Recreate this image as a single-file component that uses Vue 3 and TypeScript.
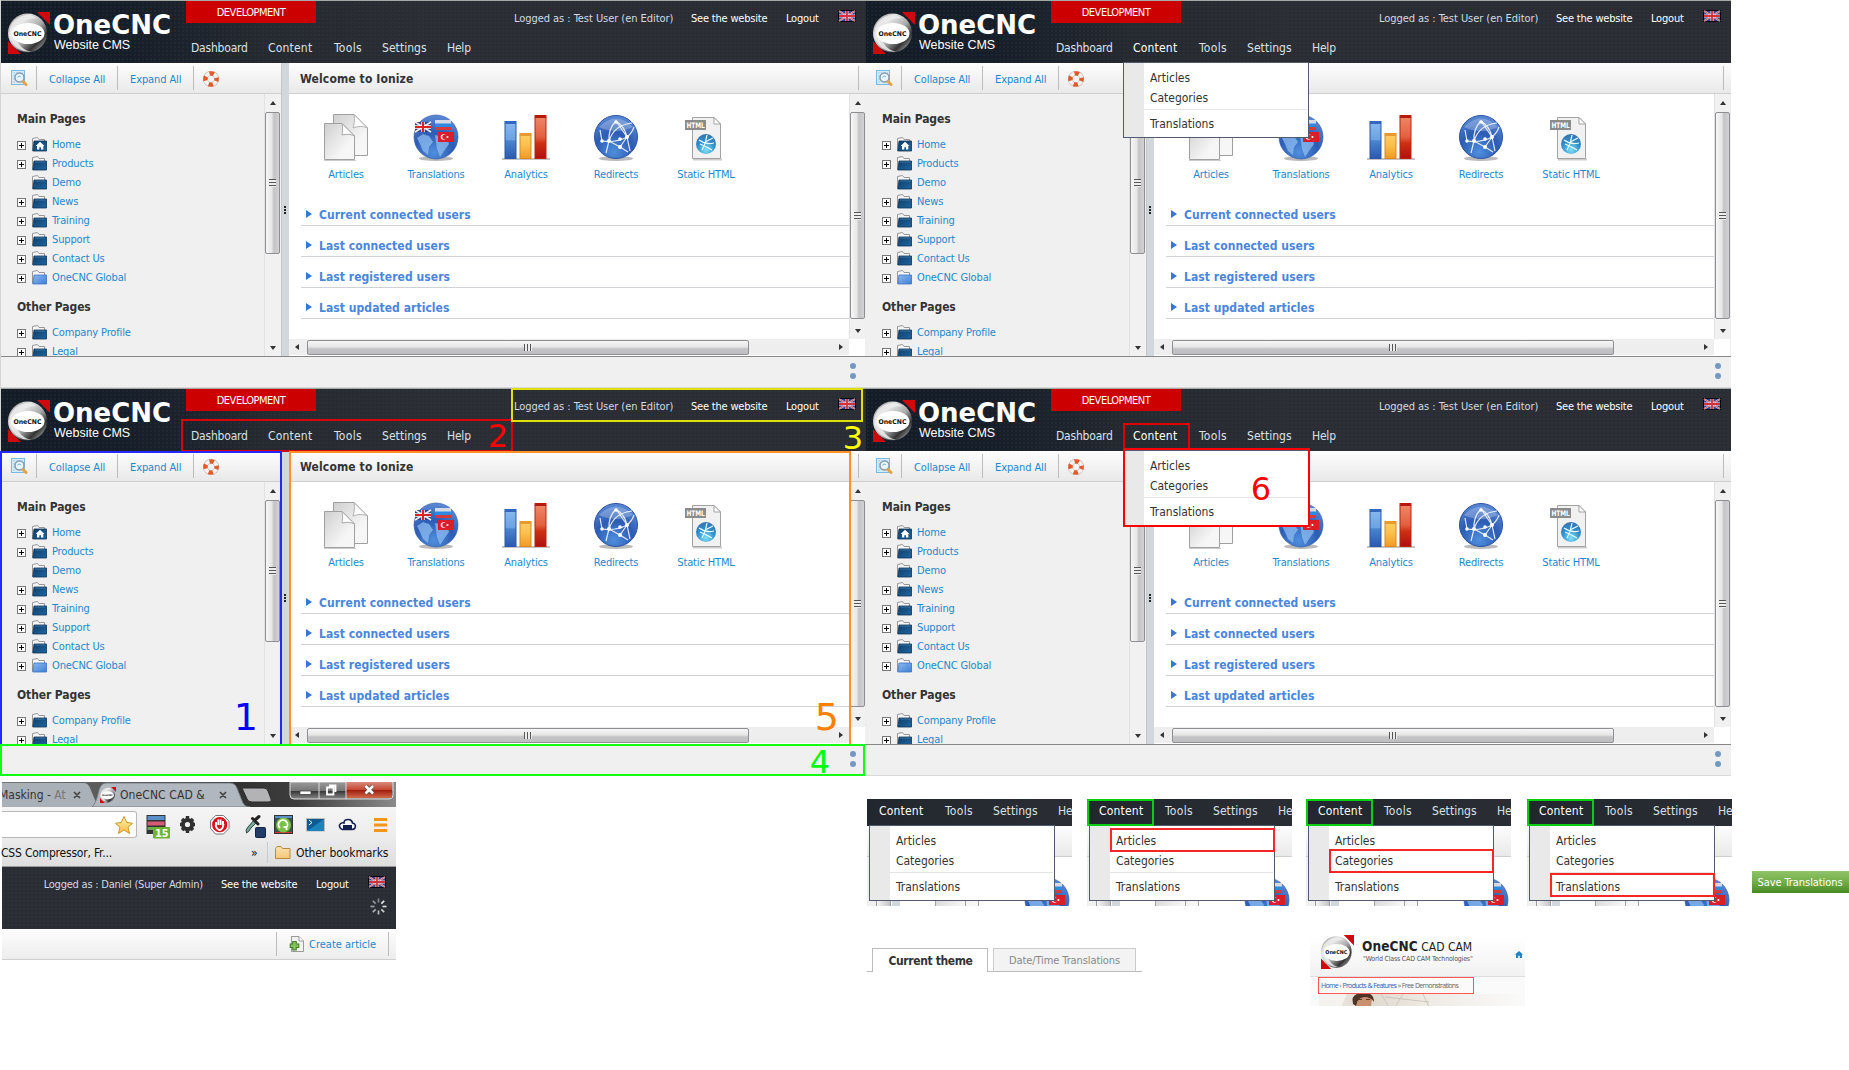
<script setup lang="ts">
interface Panel { open: boolean }
interface Mark { cls: string; label: string }

const panels: Panel[] = [{ open: false }, { open: true }, { open: false }, { open: true }]
const nav: string[] = ['Dashboard', 'Content', 'Tools', 'Settings', 'Help']
const mainPages = [
  { name: 'Home', icon: 'folder-home', plus: true },
  { name: 'Products', icon: 'folder', plus: true },
  { name: 'Demo', icon: 'folder', plus: false },
  { name: 'News', icon: 'folder', plus: true },
  { name: 'Training', icon: 'folder', plus: true },
  { name: 'Support', icon: 'folder', plus: true },
  { name: 'Contact Us', icon: 'folder', plus: true },
  { name: 'OneCNC Global', icon: 'folder-light', plus: true },
]
const otherPages = [
  { name: 'Company Profile', icon: 'folder', plus: true },
  { name: 'Legal', icon: 'folder', plus: true },
]
const groups = [
  { title: 'Main Pages', pages: mainPages },
  { title: 'Other Pages', pages: otherPages },
]
const shortcuts = [
  { name: 'Articles', icon: 'articles' },
  { name: 'Translations', icon: 'globe-flags' },
  { name: 'Analytics', icon: 'analytics' },
  { name: 'Redirects', icon: 'redirects' },
  { name: 'Static HTML', icon: 'html' },
]
const sections: string[] = ['Current connected users', 'Last connected users', 'Last registered users', 'Last updated articles']
const marks: Mark[] = [
  { cls: 'm2', label: '2' },
  { cls: 'm3', label: '3' },
  { cls: 'm1', label: '1' },
  { cls: 'm5', label: '5' },
  { cls: 'm4', label: '4' },
  { cls: 'm6a', label: '' },
  { cls: 'm6', label: '6' },
]
const menuShots: string[] = ['', 'hit-articles', 'hit-categories', 'hit-translations']
const spokes: number[] = [0, 45, 90, 135, 180, 225, 270, 315]
</script>

<template>
  <div class="page">
    <svg class="defs" width="0" height="0">
      <defs>
        <linearGradient id="gSteel" x1="0" y1="0" x2="1" y2="1">
          <stop offset="0" stop-color="#777" /><stop offset=".3" stop-color="#e4e4e4" /><stop offset=".55" stop-color="#aaa" /><stop offset=".75" stop-color="#333" /><stop offset="1" stop-color="#ddd" />
        </linearGradient>
        <linearGradient id="gFolder" x1="0" y1="0" x2="1" y2="1"><stop offset="0" stop-color="#0f3f6c" /><stop offset="1" stop-color="#1f659f" /></linearGradient>
        <linearGradient id="gFolderL" x1="0" y1="0" x2="1" y2="1"><stop offset="0" stop-color="#8db8f2" /><stop offset="1" stop-color="#3e7fd6" /></linearGradient>
        <linearGradient id="gPaper" x1="0" y1="0" x2="1" y2="1"><stop offset="0" stop-color="#cfcfcf" /><stop offset=".7" stop-color="#f6f6f6" /></linearGradient>
        <radialGradient id="gGlobe" cx=".45" cy=".85" r=".9"><stop offset="0" stop-color="#4f8fdd" /><stop offset=".5" stop-color="#2c5cb4" /><stop offset="1" stop-color="#6090da" /></radialGradient>
        <radialGradient id="gGlobe2" cx=".5" cy=".8" r=".9"><stop offset="0" stop-color="#7fe0f8" /><stop offset=".5" stop-color="#2f8fcb" /><stop offset="1" stop-color="#3a6aa8" /></radialGradient>
        <linearGradient id="gBlue" x1="0" y1="0" x2="0" y2="1"><stop offset="0" stop-color="#8ab9ee" /><stop offset=".5" stop-color="#6ba2e2" /><stop offset=".52" stop-color="#4a84cf" /><stop offset="1" stop-color="#2b59b0" /></linearGradient>
        <linearGradient id="gGold" x1="0" y1="0" x2="0" y2="1"><stop offset="0" stop-color="#fbd06a" /><stop offset=".45" stop-color="#fbc04f" /><stop offset="1" stop-color="#f09a26" /></linearGradient>
        <linearGradient id="gRed" x1="0" y1="0" x2="0" y2="1"><stop offset="0" stop-color="#f08a68" /><stop offset=".5" stop-color="#e2603f" /><stop offset=".65" stop-color="#cc3010" /><stop offset="1" stop-color="#b01010" /></linearGradient>
        <linearGradient id="gStar" x1="0" y1="0" x2="0" y2="1"><stop offset="0" stop-color="#fff3b0" /><stop offset="1" stop-color="#f7b93c" /></linearGradient>
        <linearGradient id="gYFolder" x1="0" y1="0" x2="0" y2="1"><stop offset="0" stop-color="#fbe3ac" /><stop offset="1" stop-color="#f3c777" /></linearGradient>
      </defs>

      <symbol id="emblem" viewBox="0 0 42 42">
        <path d="M29 0H42V13zM0 29V42H13z" fill="#cf0a0f" />
        <circle cx="19.500" cy="21" r="19.500" fill="url(#gSteel)" />
        <path d="M1.500 21A18 18 0 0 1 30 6.500C21 5 8 10 7.500 21C8 32 16 39 23 39.500A19 19 0 0 1 1.500 21z" fill="#ececec" opacity=".85" />
        <ellipse cx="20" cy="21.500" rx="16.500" ry="10.500" fill="#fff" />
        <text x="5.500" y="23.500" textLength="28" lengthAdjust="spacingAndGlyphs" font-size="6.500" font-weight="700" font-family="DejaVu Sans" fill="#111">OneCNC</text>
      </symbol>

      <symbol id="uk" viewBox="0 0 18 12">
        <rect width="18" height="12" fill="#05050d" />
        <rect x="1" y="1" width="16" height="10" fill="#34458a" />
        <path d="M1 1L17 11M17 1L1 11" stroke="#e6c8d0" stroke-width="1.800" />
        <path d="M1 1L17 11M17 1L1 11" stroke="#d0434e" stroke-width=".8" />
        <path d="M9 1V11M1 6H17" stroke="#f5e2e4" stroke-width="3" />
        <path d="M9 1V11M1 6H17" stroke="#d5303c" stroke-width="1.800" />
      </symbol>

      <symbol id="folder" viewBox="0 0 15 15">
        <path d="M.5 13.500V1.500L5.500 .5L7 2.500H12.500V5" fill="#f5f5f5" stroke="#969696" />
        <path d="M2 5H14.500V14H.8z" fill="url(#gFolder)" stroke="#0c3357" stroke-width=".8" />
        <path d="M2.800 6H13.500" stroke="#4a86b5" stroke-width=".7" />
      </symbol>
      <symbol id="folder-light" viewBox="0 0 15 15">
        <path d="M.5 13.500V1.500L5.500 .5L7 2.500H12.500V5" fill="#f5f5f5" stroke="#969696" />
        <path d="M2 5H14.500V14H.8z" fill="url(#gFolderL)" stroke="#3b73c4" stroke-width=".8" />
      </symbol>
      <symbol id="folder-home" viewBox="0 0 15 15">
        <path d="M.5 13.500V1.500L5.500 .5L7 2.500H12.500V5" fill="#f5f5f5" stroke="#969696" />
        <path d="M2 4H14.500V14H.8z" fill="url(#gFolder)" stroke="#0c3357" stroke-width=".8" />
        <path d="M8 4.800L12.500 9H11.300V12.500H9V10.200H7.300V12.500H5V9H3.700z" fill="#fff" />
      </symbol>

      <symbol id="search" viewBox="0 0 17 17">
        <rect x=".5" y=".5" width="13" height="14" fill="#d4ecfb" stroke="#7cb9e0" />
        <path d="M2 3H12M2 6H5M2 9H5M2 12H5" stroke="#9fcdea" stroke-dasharray="2 1" />
        <circle cx="8.500" cy="7.500" r="4.500" fill="#eaf6fe" stroke="#8b9bab" stroke-width="1.500" />
        <path d="M6.500 7.500A2 2 0 0 1 10 7" stroke="#6bb3e4" fill="none" />
        <path d="M12 11.500L15 14.500" stroke="#e0a548" stroke-width="3" stroke-linecap="round" />
      </symbol>
      <symbol id="buoy" viewBox="0 0 16 16">
        <circle cx="8" cy="8" r="5.600" fill="none" stroke="#b9b0ab" stroke-width="4.800" />
        <circle cx="8" cy="8" r="5.600" fill="none" stroke="#f7f3f0" stroke-width="3.800" />
        <circle cx="8" cy="8" r="5.600" fill="none" stroke="#e4592a" stroke-width="4.400" stroke-dasharray="4.400 4.400" stroke-dashoffset="2.200" />
      </symbol>

      <symbol id="articles" viewBox="0 0 48 48">
        <path d="M11.500 1.500H32L45.500 15V42.500H11.500z" fill="url(#gPaper)" stroke="#a0a0a0" />
        <path d="M32 1.500C33 7 32 12 31 15C36 13 41 13 45.500 15z" fill="#fcfcfc" stroke="#b0b0b0" />
        <path d="M2.500 10.500H20L32.500 23V46.500H2.500z" fill="url(#gPaper)" stroke="#a0a0a0" />
        <path d="M20 10.500C21 15 20.500 19 20 22C24 21 29 21 32.500 23z" fill="#fcfcfc" stroke="#aaa" />
        <path d="M2 47.500H34" stroke="#ccc" />
      </symbol>
      <symbol id="globe-flags" viewBox="0 0 48 48">
        <ellipse cx="24" cy="45.500" rx="17" ry="2.500" fill="#bbb" />
        <circle cx="24" cy="24" r="22" fill="url(#gGlobe)" stroke="#2a51a0" stroke-width=".6" />
        <path d="M5 25L11 21L17 23L21 29L17 34L16 42L11 38L8 31zM23 22L35 25L37 31L32 38L28 44L25 36z" fill="#8dbcf0" opacity=".75" />
        <g transform="translate(3 9)"><rect width="16" height="10" fill="#304489" /><path d="M0 0L16 10M16 0L0 10" stroke="#eee" stroke-width="1.600" /><path d="M8 0V10M0 5H16" stroke="#fff" stroke-width="3.400" /><path d="M8 0V10M0 5H16" stroke="#d22" stroke-width="2" /></g>
        <g transform="translate(23 7)"><rect width="16" height="4" fill="#d5dae2" /><rect y="3.500" width="16" height="4" fill="#2a8be0" /><rect y="7" width="16" height="3" fill="#d63a3a" /></g>
        <g transform="translate(26 19)"><rect width="16" height="10" fill="#dc1d2a" /><circle cx="5.500" cy="5" r="2.800" fill="#fff" /><circle cx="6.400" cy="5" r="2.200" fill="#dc1d2a" /><circle cx="9.500" cy="5" r="1" fill="#fff" /></g>
      </symbol>
      <symbol id="analytics" viewBox="0 0 48 48">
        <path d="M0 46H48" stroke="#c5c5c5" stroke-width="2" />
        <rect x="3" y="8.500" width="11" height="37" fill="url(#gBlue)" stroke="#2b58ac" /><path d="M2.500 11L4 8H13L14.500 11" fill="#3067c0" />
        <rect x="18" y="20.500" width="11" height="25" fill="url(#gGold)" stroke="#dc871e" /><path d="M17.500 23L19 20H28L29.500 23" fill="#e79a2d" />
        <rect x="33" y="2.500" width="11" height="43" fill="url(#gRed)" stroke="#b7260d" /><path d="M32.500 5L34 2H43L44.500 5" fill="#b5180c" />
      </symbol>
      <symbol id="redirects" viewBox="0 0 48 48">
        <ellipse cx="24" cy="45.500" rx="17" ry="2.500" fill="#bbb" />
        <circle cx="24" cy="24" r="21.500" fill="url(#gGlobe)" stroke="#2a51a0" />
        <path d="M7 14Q24 -3 41 14Q24 22 7 14z" fill="#fff" opacity=".25" />
        <path d="M24 8Q16 16 17 28L14 40M24 8Q33 14 35 24L38 38M10 28Q24 30 35 24Q40 20 42 14M17 28Q22 12 40 10M17 28L28 34L35 24M28 34L36 39M10 28L8 17M24 8L35 24" stroke="#fff" stroke-width="1.200" fill="none" opacity=".85" />
        <g fill="#fff"><circle cx="24" cy="9" r="1.800" /><circle cx="10" cy="28" r="1.800" /><circle cx="17" cy="28" r="2" /><circle cx="28" cy="34" r="2" /><circle cx="35" cy="24" r="2" /><circle cx="28" cy="26" r="1.800" /></g>
      </symbol>
      <symbol id="html" viewBox="0 0 48 48">
        <path d="M11 46.500H40" stroke="#ccc" stroke-width="2" />
        <path d="M10.500 4.500H32L38.500 11V45.500H10.500z" fill="#f1f1f1" stroke="#a2a2a2" />
        <path d="M32 4.500V11H38.500z" fill="#fff" stroke="#a2a2a2" />
        <rect x="3" y="7" width="21" height="10" fill="#8b8b8b" />
        <text x="4.500" y="15" textLength="18" lengthAdjust="spacingAndGlyphs" font-size="7.500" font-weight="700" font-family="DejaVu Sans" fill="#fff">HTML</text>
        <circle cx="24" cy="31" r="10" fill="url(#gGlobe2)" />
        <path d="M17 27Q24 32 32 30M20 37Q24 30 25 22M18 31Q25 34 30 37M23 29L31 25" stroke="#e8fbff" stroke-width="1.200" fill="none" />
      </symbol>
    </svg>

    <div class="panels">
      <section v-for="(p, i) in panels" :key="i" class="panel">
        <header class="head">
          <svg class="emblem" width="42" height="42"><use href="#emblem" /></svg>
          <div class="brand"><b>OneCNC</b><span>Website CMS</span></div>
          <div class="head-mid">
            <div class="env">DEVELOPMENT</div>
            <nav class="nav">
              <span v-for="n in nav" :key="n" :class="[n.toLowerCase(), { on: p.open && n === 'Content' }]">{{ n }}</span>
            </nav>
          </div>
          <div class="user">
            <span class="who">Logged as : Test User (en Editor)</span><span class="see">See the website</span><span class="out">Logout</span>
            <svg width="18" height="12"><use href="#uk" /></svg>
          </div>
        </header>
        <div class="body">
          <aside class="side">
            <div class="bar">
              <svg class="i-search" width="17" height="17"><use href="#search" /></svg>
              <i class="sep"></i><a class="b1">Collapse All</a><i class="sep"></i><a class="b2">Expand All</a><i class="sep"></i>
              <svg class="i-buoy" width="16" height="16"><use href="#buoy" /></svg>
            </div>
            <div class="side-body">
              <div class="tree">
                <div v-for="g in groups" :key="g.title" class="group">
                  <h3>{{ g.title }}</h3>
                  <div v-for="pg in g.pages" :key="pg.name" class="node">
                    <i class="plus" :class="{ none: !pg.plus }"></i>
                    <svg width="15" height="15"><use :href="'#' + pg.icon" /></svg>
                    <a>{{ pg.name }}</a>
                  </div>
                </div>
              </div>
              <div class="vscroll side-scroll"><i class="up"></i><div class="thumb"><i class="grip"></i></div><i class="down"></i></div>
            </div>
          </aside>
          <div class="split"><i></i><i></i><i></i></div>
          <main class="main">
            <div class="bar title"><b v-if="!p.open">Welcome to Ionize</b><i class="sep"></i></div>
            <div class="main-body">
              <div class="pane">
                <div class="view">
                  <div class="icons">
                    <div v-for="s in shortcuts" :key="s.name" class="cut">
                      <svg width="48" height="48"><use :href="'#' + s.icon" /></svg>
                      <a>{{ s.name }}</a>
                    </div>
                  </div>
                  <div v-for="s in sections" :key="s" class="acc"><i></i><b>{{ s }}</b></div>
                </div>
                <div class="hscroll"><i class="left"></i><div class="hthumb"><i class="hgrip"></i></div><i class="right"></i></div>
              </div>
              <div class="vscroll main-scroll"><i class="up"></i><div class="thumb"><i class="grip"></i></div><i class="down"></i></div>
            </div>
          </main>
        </div>
        <footer class="foot"><i></i><i></i></footer>
        <div v-if="p.open" class="menu"><span>Articles</span><span>Categories</span><hr /><span>Translations</span></div>
      </section>
      <div v-for="m in marks" :key="m.cls" class="mark" :class="m.cls"><span v-if="m.label">{{ m.label }}</span></div>
    </div>

    <div class="lower">
      <div class="browser">
        <div class="tabs">
          <svg width="394" height="25" viewBox="0 0 394 25">
            <defs>
              <linearGradient id="gStrip" x1="0" y1="0" x2="1" y2="0"><stop offset="0" stop-color="#777" /><stop offset=".6" stop-color="#333" /><stop offset=".75" stop-color="#3d3d3d" /><stop offset="1" stop-color="#8a8a8a" /></linearGradient>
              <linearGradient id="gBtn" x1="0" y1="0" x2="0" y2="1"><stop offset="0" stop-color="#999" /><stop offset=".5" stop-color="#777" /><stop offset=".52" stop-color="#333" /><stop offset="1" stop-color="#888" /></linearGradient>
              <linearGradient id="gClose" x1="0" y1="0" x2="0" y2="1"><stop offset="0" stop-color="#d98a7c" /><stop offset=".5" stop-color="#c4452f" /><stop offset=".52" stop-color="#a01f0c" /><stop offset="1" stop-color="#d06a4c" /></linearGradient>
            </defs>
            <rect width="394" height="25" fill="url(#gStrip)" />
            <path d="M0 1H82Q86 1 88 6L96 25H0z" fill="#a9b0b8" />
            <path d="M90 25Q94 22 97 8Q99 1 104 1H228Q233 1 235 6L241 21Q243 25 248 25z" fill="#b0b7be" stroke="#6d7278" stroke-width=".8" />
            <path d="M240 6H262Q265 6 266 9L269 17Q270 20 266 20H250Q246 20 245 17z" fill="#b3b3b5" stroke="#2b2b2b" />
            <path d="M288 0H391V13Q391 17 387 17H292Q288 17 288 13z" fill="url(#gBtn)" stroke="#ddd" />
            <path d="M344 0H390V16H344z" fill="url(#gClose)" />
            <path d="M317 0V17M344 0V17" stroke="#ddd" />
            <rect x="298" y="9" width="11" height="3.500" fill="#fff" stroke="#444" stroke-width=".8" />
            <path d="M327 3.500H333.500V10M325 5.500H331.500V12.500H325z" fill="none" stroke="#fff" stroke-width="1.800" />
            <path d="M363.500 4L371 11.500M371 4L363.500 11.500" stroke="#555" stroke-width="4" /><path d="M363.500 4L371 11.500M371 4L363.500 11.500" stroke="#fff" stroke-width="2.500" />
            <path d="M72 10L78 16M78 10L72 16M218 10L224 16M224 10L218 16" stroke="#444" stroke-width="1.700" />
          </svg>
          <div class="tabtext"><span class="t1">Masking - <em>At</em></span><svg width="16" height="16"><use href="#emblem" /></svg><span class="t2">OneCNC CAD &amp;</span></div>
        </div>
        <div class="omni">
          <div class="url"></div>
          <svg width="394" height="38" viewBox="0 0 394 38">
            <path d="M122 9.500L124.800 15.500L130.500 16.300L126 20.300L127.600 26.500L122 23L116.400 26.500L118 20.300L113.500 16.300L119.200 15.500z" fill="url(#gStar)" stroke="#cf9428" />
            <g><rect x="144.500" y="8" width="19" height="19" fill="#333" /><rect x="145.500" y="9" width="17" height="4" fill="#5b8fca" /><rect x="145.500" y="14.500" width="17" height="4" fill="#d75a77" /><rect x="145.500" y="20" width="17" height="3" fill="#69aa4e" /><rect x="151" y="20" width="17" height="11.500" rx="1" fill="#6fb42c" /><text x="153" y="29.500" font-size="10.500" font-weight="700" font-family="DejaVu Sans" textLength="13.500" lengthAdjust="spacingAndGlyphs" fill="#fff">15</text></g>
            <g transform="translate(185.500 17.500)"><circle r="4.600" fill="none" stroke="#303030" stroke-width="4" /><path d="M-7.500 0H-5M5 0H7.500M0 -8.500V-5M0 5V8.500M-5.500 -5.500L-4 -4M5.500 -5.500L4 -4M-5.500 5.500L-4 4M5.500 5.500L4 4" stroke="#303030" stroke-width="3.400" /></g>
            <path d="M213.500 8.500H221.500L227 14V21.500L221.500 27H213.500L208.500 21.500V14z" fill="#fff" stroke="#777" /><circle cx="217.700" cy="17.700" r="7.600" fill="#dc101c" /><path d="M214 20V15M216.300 18V12.500M218.600 18V12.500M221 19V14M213.500 18Q215 23 218 23Q221 22 221.500 17" stroke="#fff" stroke-width="1.900" fill="none" />
            <path d="M244.500 26Q243 23 246 20L252 13L254.500 15.500L249 21Q247 25 244.500 26z" fill="#7ba79a" stroke="#2d4b49" /><path d="M250.500 11.500L256 17M253 13L257 9.500" stroke="#222" stroke-width="3" stroke-linecap="round" /><rect x="253.500" y="20.500" width="10" height="10" rx="1" fill="#233b69" stroke="#13243f" />
            <rect x="272.500" y="8.500" width="18" height="18" fill="#37584b" stroke="#333" /><path d="M273 10H290" stroke="#5b8fca" stroke-width="2" /><path d="M273 25.500H290" stroke="#d33" /><circle cx="281.500" cy="18" r="7.500" fill="#7cc04a" /><path d="M278 21A4.500 4.500 0 1 1 284.500 20.500M284.500 23V20H281.500" stroke="#fff" stroke-width="1.800" fill="none" />
            <rect x="304.500" y="11.500" width="18" height="12.500" fill="#0e5a92" stroke="#b6bcc2" /><path d="M305 24L322 12V24z" fill="#1d83bb" /><path d="M307 13L310 15.500L307 18" stroke="#fff" fill="none" />
            <path d="M340.500 22.500Q337 21 337.500 18Q339 15 342 16Q342 12 347 12.500Q350 13 350.500 16Q354.500 17 353 21Q352 22.500 350 22.500z" fill="#f7f9ff" stroke="#11204f" stroke-width="1.600" /><path d="M341 18H350V23H341z" fill="#11204f" />
            <path d="M372 12.500H385M372 18H385M372 23.500H385" stroke="#f1951b" stroke-width="3" />
          </svg>
        </div>
        <div class="bookmarks"><span class="css">CSS Compressor, Fr...</span><span class="more">»</span><i></i>
          <svg width="16" height="14" viewBox="0 0 16 14"><path d="M.5 2.500L2 .5H6L7.500 2.500H15V12.500H.5z" fill="url(#gYFolder)" stroke="#b98a3e" /></svg>
          <span class="other">Other bookmarks</span></div>
        <div class="bhead">
          <div class="user"><span class="who">Logged as : Daniel (Super Admin)</span><span class="see">See the website</span><span class="out">Logout</span><svg width="18" height="12"><use href="#uk" /></svg></div>
          <svg class="spin" width="17" height="17" viewBox="-8.500 -8.500 17 17"><path v-for="a in spokes" :key="a" d="M0 -4V-8" :transform="`rotate(${a})`" stroke="#e6e6e6" stroke-width="1.700" :opacity="1 - ((a + 315) % 360) / 600" /></svg>
        </div>
        <div class="bbar"><i class="sep"></i>
          <svg width="16" height="17" viewBox="0 0 16 17"><path d="M2.500 .5H10L14.500 5V15.500H2.500z" fill="#f2f2f2" stroke="#999" /><path d="M10 .5V5H14.500" fill="#fff" stroke="#999" /><path d="M5.500 5V14.500M.7 9.700H10.300" stroke="#3f7d22" stroke-width="4.600" /><path d="M5.500 6V13.500M1.700 9.700H9.300" stroke="#83c45a" stroke-width="2.600" /></svg>
          <a>Create article</a><i class="sep"></i></div>
      </div>

      <div class="right-col">
        <div class="shots">
          <div v-for="(s, i) in menuShots" :key="i" class="shot">
            <div class="shot-nav"><span class="on content">Content</span><span class="tools">Tools</span><span class="settings">Settings</span><span>He</span></div>
            <div class="shot-bar"></div>
            <div class="shot-under">
              <i class="u-side"></i><i class="u-scroll"></i><i class="u-split"></i>
              <svg class="u-art" width="48" height="48"><use href="#articles" /></svg>
              <svg class="u-globe" width="48" height="48"><use href="#globe-flags" /></svg>
            </div>
            <div class="menu shot-menu"><span>Articles</span><span>Categories</span><hr /><span>Translations</span></div>
            <i v-if="s" class="frame-green"></i><i v-if="s" class="frame-red" :class="s"></i>
          </div>
          <button class="save">Save Translations</button>
        </div>
        <div class="extras">
          <div class="theme"><i class="lead"></i><b>Current theme</b><i class="gap"></i><span>Date/Time Translations</span><i class="tail"></i></div>
          <div class="site">
            <div class="site-head">
              <svg width="33" height="34" viewBox="0 0 42 42" preserveAspectRatio="none"><use href="#emblem" width="42" height="42" /></svg>
              <div class="site-brand"><div><b>OneCNC</b> CAD CAM</div><span>"World Class CAD CAM Technologies"</span></div>
              <svg class="house" width="8" height="7" viewBox="0 0 8 7"><path d="M4 0L8 3.500H7V7H4.800V4.800H3.200V7H1V3.500H0z" fill="#1b86c8" /></svg>
            </div>
            <div class="crumb"><a>Home</a> › <a>Products &amp; Features</a> » Free Demonstrations</div>
            <svg class="photo" width="205" height="13" viewBox="0 0 205 13">
              <defs><linearGradient id="gWall" x1="0" y1="0" x2="1" y2="0"><stop offset="0" stop-color="#efece8" /><stop offset=".25" stop-color="#dfd9cf" /><stop offset=".55" stop-color="#efece6" /><stop offset="1" stop-color="#fafafa" /></linearGradient></defs>
              <rect width="205" height="13" fill="url(#gWall)" /><path d="M0 0V13H22L28 0z" fill="#f5f3f0" /><path d="M62 0L70 13M84 0L76 13M104 0L110 13M66 3L110 8" stroke="#cfc6ba" fill="none" />
              <path d="M37 13V3Q38 0 44 0Q52 0 53 4L52 13z" fill="#c9906f" /><path d="M34 10Q32 2 38 0H51Q55 2 55 8Q52 3 45 3Q38 4 37 12z" fill="#4c3325" />
              <path d="M39 5.500H43M47 5.500H51" stroke="#5c3a28" />
            </svg>
          </div>
        </div>
      </div>
    </div>
  </div>
</template>

<style>
html, body { margin: 0; background: #fff; }
</style>

<style scoped>
.page { width: 1849px; height: 1070px; overflow: hidden; background: #fff; font-family: "DejaVu Sans Condensed", "DejaVu Sans", sans-serif; font-stretch: condensed; font-size: 11px; color: #333; white-space: nowrap; }
.page *, .page *::before { box-sizing: border-box; }
.page svg { flex: none; display: block; }
.defs { position: absolute; }
i { display: block; flex: none; }
a { color: #1e88cd; }
.panels { position: relative; display: grid; grid-template-columns: 865px 865px; grid-template-rows: 388px 388px; width: 1731px; padding-left: 1px; }
.panels::before { content: ""; position: absolute; left: 0; top: 0; width: 1px; height: 776px; background: #d5d5d5; }
.panel { position: relative; height: 388px; overflow: visible; border-top: 1px solid #a5a9a6; display: flex; flex-direction: column; background: #f0f0f0; }
.head { height: 62px; display: flex; background: radial-gradient(circle, #343941 0, transparent 1px) 0 0 / 4px 4px, linear-gradient(90deg, #131b26 0, #161e29 130px, #252930 260px, #2a2e34 420px, #2a2e34 100%); color: #fff; }
.emblem { margin: 11px 0 0 7px; }
.brand { width: 136px; padding-left: 3px; display: flex; flex-direction: column; }
.brand b { font: 700 26px/30px "DejaVu Sans"; font-stretch: normal; margin-top: 9px; }
.brand span { font: 12.500px/15px "Liberation Sans"; margin: -2px 0 0 1px; letter-spacing: 0; }
.head-mid { display: flex; flex-direction: column; }
.env { width: 130px; height: 22px; background: #c00; text-align: center; line-height: 22px; padding-top: 1px; font-size: 11px; letter-spacing: -.5px; }
.nav { display: flex; margin: 17px 0 0 5px; font-size: 12px; line-height: 17px; color: #dbe1e8; letter-spacing: -.2px; }
.dashboard { width: 77px; }
.content { width: 66px; flex: none; letter-spacing: .2px; }
.tools { width: 48px; flex: none; letter-spacing: .3px; }
.settings { width: 65px; flex: none; letter-spacing: .05px; }
.on { color: #fff; }
.user { margin-left: auto; display: flex; font-size: 11px; line-height: 16px; color: #d3dae2; padding: 10px 10px 0 0; letter-spacing: -.2px; }
.user svg { margin-top: -1px; }
.who { width: 177px; letter-spacing: -.05px; }
.see { width: 95px; color: #fff; }
.out { width: 52px; color: #fff; }
.body { display: flex; height: 293px; }
.side { width: 280px; display: flex; flex-direction: column; }
.bar { height: 31px; flex: none; display: flex; align-items: center; background: linear-gradient(#fdfdfd, #e9e9e9); border-bottom: 1px solid #cfcfcf; }
.bar a, .title b { padding-top: 2px; }
.sep { width: 1px; height: 24px; background: #bcbcbc; }
.i-search { margin: 1px 8px 0 10px; }
.b1 { width: 80px; padding-left: 12px; letter-spacing: -.1px; }
.b2 { width: 75px; padding-left: 12px; letter-spacing: -.1px; }
.i-buoy { margin: 2px 0 0 9px; }
.side-body { display: flex; height: 262px; overflow: hidden; background: #f0f0f0; }
.tree { width: 263px; padding-left: 16px; overflow: hidden; }
.group h3 { margin: 0; font-size: 12px; line-height: 16px; padding: 17px 0 8px; letter-spacing: -.1px; color: #333; }
.group + .group h3 { padding: 12px 0 8px; }
.node { height: 19px; display: flex; align-items: center; letter-spacing: -.15px; }
.node svg { margin: -1px 5px 0 6px; }
.plus { width: 9px; height: 9px; border: 1px solid #777; margin-top: 2px; background: linear-gradient(#000, #000) center / 5px 1px no-repeat, linear-gradient(#000, #000) center / 1px 5px no-repeat, #fff; }
.plus.none { visibility: hidden; }
.vscroll { width: 16px; display: flex; flex-direction: column; align-items: center; background: #f1f1f1; border-left: 1px solid #e2e2e2; }
.up { margin-top: 7px; border: 3.500px solid transparent; border-top: 0; border-bottom: 4px solid #333; }
.down { margin-top: auto; margin-bottom: 6px; border: 3.500px solid transparent; border-bottom: 0; border-top: 4px solid #333; }
.thumb { width: 15px; margin-top: 7px; border: 1px solid #8f8f93; border-radius: 2px; background: linear-gradient(90deg, #f6f6f6, #e6e6e6 45%, #c4c4c7 60%, #d2d2d4); display: flex; align-items: center; justify-content: center; }
.side-scroll .thumb { height: 142px; }
.main-scroll .thumb { height: 207px; }
.side-scroll { height: 262px; }
.main-scroll { height: 245px; }
.grip { width: 7px; height: 8px; background: repeating-linear-gradient(#555 0 1px, #eee 1px 3px); }
.split { width: 8px; background: #d2d7dc; border-left: 1px solid #c3c7cb; padding: 143px 0 0 2px; }
.split i { width: 2px; height: 2px; background: #222; margin-bottom: 1px; }
.main { width: 577px; display: flex; flex-direction: column; }
.title b { font-size: 12px; margin-left: 11px; color: #333; letter-spacing: .12px; }
.title .sep { margin: 0 7px 0 auto; }
.main-body { display: flex; height: 262px; background: linear-gradient(90deg, #fff 576px, #eee 0); }
.pane { width: 560px; display: flex; flex-direction: column; }
.view { height: 245px; }
.icons { display: flex; padding: 19px 0 0 12px; height: 104px; }
.cut { width: 90px; display: flex; flex-direction: column; align-items: center; letter-spacing: -.15px; }
.cut a { line-height: 14px; margin-top: 7px; }
.acc { height: 31px; margin-left: 12px; border-bottom: 1px solid #d0d3d6; display: flex; align-items: center; padding: 9px 0 0 5px; color: #4a86dd; font-size: 12px; }
.acc:nth-child(2) { height: 28px; padding-top: 6px; }
.acc i { border: 4px solid transparent; border-left: 6px solid #3577d4; border-right: 0; margin: -1px 7px 0 0; }
.acc b { letter-spacing: .06px; }
.hscroll { height: 16px; display: flex; align-items: center; background: #eee; }
.left { margin-left: 6px; border: 3.500px solid transparent; border-left: 0; border-right: 4px solid #333; }
.hthumb { width: 442px; height: 15px; margin-left: 8px; border: 1px solid #8f8f93; border-radius: 2px; background: linear-gradient(#f6f6f6, #e6e6e6 45%, #c4c4c7 60%, #bfbfc1); display: flex; align-items: center; justify-content: center; }
.hgrip { width: 8px; height: 7px; background: repeating-linear-gradient(90deg, #555 0 1px, #eee 1px 3px); }
.right { margin: 0 6px 0 auto; border: 3.500px solid transparent; border-right: 0; border-left: 4px solid #333; }
.foot { height: 32px; background: #f0f0f0; border-top: 1px solid #878787; border-bottom: 1px solid #d8d8d8; padding-top: 6px; }
.foot i { width: 6px; height: 6px; border-radius: 50%; background: #7399c3; margin: 0 0 4px 849px; }
.menu { position: absolute; left: 257px; top: 61px; width: 186px; height: 76px; border: 1px solid #505b70; background: linear-gradient(90deg, #e9e9e9 20px, #fff 0); display: flex; flex-direction: column; padding: 5px 0 0 26px; font-size: 12px; color: #333; line-height: 20px; letter-spacing: -.02px; z-index: 2; }
.menu hr { margin: 1px 1px 4px -6px; border: 0; height: 1px; background: #e5e5e5; flex: none; }
.mark { position: absolute; z-index: 3; border: 2px solid; display: flex; justify-content: flex-end; align-items: flex-end; font-family: "DejaVu Sans"; font-stretch: normal; font-size: 32px; line-height: 24px; }
.m1 { left: 0; top: 451px; width: 282px; height: 295px; color: #00f; border-color: #2626ff; font-size: 38px; line-height: 30px; padding: 0 22px 12px 0; }
.m2 { left: 181px; top: 419px; width: 332px; height: 33px; color: #f00; border-color: #d8060a; padding: 0 3px 2px 0; }
.m3 { left: 511px; top: 388px; width: 352px; height: 34px; color: #ff0; border-color: #dfdf0a; }
.m3 span { margin: 0 -2px -30px 0; }
.m4 { left: 0; top: 744px; width: 865px; height: 32px; color: #0f0; border-color: #12ff12; padding: 0 33px 0 0; }
.m5 { left: 289px; top: 451px; width: 562px; height: 295px; color: #ff8000; border-color: #ff9126; font-size: 38px; line-height: 30px; padding: 0 10px 12px 0; }
.m6a { left: 1123px; top: 423px; width: 67px; height: 27px; color: #e10000; }
.m6 { left: 1123px; top: 448px; width: 187px; height: 79px; color: #f00; padding: 0 37px 24px 0; }
.lower { display: flex; }
.browser { width: 394px; height: 178px; margin: 6px 0 0 2px; }
.tabs { height: 25px; position: relative; }
.tabtext { position: absolute; inset: 0; display: flex; align-items: center; font-size: 12px; color: #333; overflow: hidden; }
.tabtext em { font-style: normal; color: #777; }
.t1 { width: 98px; flex: none; text-indent: -3px; }
.t2 { margin-left: 4px; letter-spacing: .1px; }
.omni { height: 35px; background: linear-gradient(#f5f5f5, #eaeaea); position: relative; }
.url { position: absolute; left: 0; top: 4px; width: 135px; height: 27px; background: #fff; border: 1px solid #b8b8b8; border-left: 0; border-radius: 0 3px 3px 0; }
.omni svg { position: relative; }
.bookmarks { height: 25px; background: linear-gradient(#e9e9e9, #dedede); border-bottom: 1px solid #999; display: flex; align-items: center; padding-bottom: 3px; font-size: 12px; color: #111; }
.css { width: 249px; letter-spacing: -.2px; text-indent: -1px; }
.more { width: 16px; }
.bookmarks i { width: 1px; height: 21px; background: #c5ccd4; margin-right: 7px; }
.other { margin-left: 5px; letter-spacing: -.1px; }
.bhead { height: 62px; background: radial-gradient(circle, #343941 0, transparent 1px) 0 0 / 4px 4px, #2a2e34; display: flex; flex-direction: column; align-items: flex-end; }
.bhead .who { width: auto; margin-right: 18px; letter-spacing: -.22px; }
.spin { margin: 5px 9px 0 0; }
.bbar { height: 31px; background: linear-gradient(#fdfdfd, #ededed); border-bottom: 1px solid #cfcfcf; display: flex; align-items: center; justify-content: flex-end; padding-right: 7px; }
.bbar svg { margin: 0 4px 0 12px; }
.bbar a { width: 79px; }
.right-col { margin-left: 471px; width: 982px; }
.shots { display: flex; padding-top: 23px; }
.shot { position: relative; width: 205px; height: 107px; margin-right: 15px; overflow: hidden; background: #fff; flex: none; }
.shot:nth-child(2) { margin-right: 14px; }
.shot:nth-child(3) { margin-right: 16px; }
.shot-nav { height: 27px; background: linear-gradient(90deg, #22262e, #2a2e34); display: flex; padding: 4px 0 0 12px; font-size: 12px; line-height: 17px; color: #dbe1e8; letter-spacing: -.2px; overflow: hidden; }
.shot-bar { height: 31px; background: linear-gradient(#fdfdfd, #e9e9e9); border-bottom: 1px solid #cfcfcf; }
.shot-under { height: 49px; position: relative; overflow: hidden; display: flex; }
.u-side { width: 9px; background: #f0f0f0; }
.u-scroll { width: 15px; border: solid #9a9a9e; border-width: 0 1px; background: linear-gradient(90deg, #f6f6f6, #c4c4c7); }
.u-split { width: 8px; margin-left: 1px; background: #d2d7dc; }
.u-art { margin: 19px 0 0 33px; }
.u-globe { margin: 19px 0 0 42px; }
.shot .shot-menu { left: 2px; top: 26px; }
.frame-green { position: absolute; z-index: 3; left: 0; top: 0; width: 67px; height: 27px; border: 2px solid #06ce12; }
.frame-red { position: absolute; z-index: 3; left: 23px; width: 165px; height: 24px; border: 2px solid #f52828; }
.hit-articles { top: 29px; }
.hit-categories { top: 50px; }
.hit-translations { top: 74px; }
.save { width: 97px; height: 22px; flex: none; margin: 72px 0 0 5px; border: 0; padding: 1px 1px 0 0; background: linear-gradient(#8fc466, #74ad4b 50%, #468a20); color: #fff; font: inherit; letter-spacing: -.07px; }
.extras { display: flex; align-items: flex-start; }
.theme { display: flex; width: 275px; margin-top: 42px; height: 24px; font-size: 12px; line-height: 24px; text-align: center; color: #333; }
.lead, .gap, .tail { height: 24px; border-bottom: 1px solid #bbb; }
.lead { width: 5px; }
.theme b { width: 116px; border: 1px solid #bbb; border-bottom: 0; padding-left: 1px; letter-spacing: -.38px; }
.gap { width: 5px; }
.theme span { width: 143px; border: 1px solid #ccc; border-bottom-color: #bbb; background: #f3f3f3; color: #888; font-size: 11px; letter-spacing: -.1px; }
.tail { flex: 1; }
.site { width: 215px; height: 71px; margin: 29px 0 0 168px; background: linear-gradient(#fff, #f2f2f2 41px, #fafafa 41px); overflow: hidden; }
.site-head { height: 42px; border-bottom: 1px solid #ddd; display: flex; padding-left: 11px; }
.site-brand { width: 161px; padding: 4px 0 0 8px; font-size: 12px; line-height: 15px; color: #222; }
.site-brand b { font-size: 13.500px; letter-spacing: .1px; }
.site-brand span { display: block; margin-left: 1px; font-size: 7px; line-height: 8px; letter-spacing: -.2px; color: #555; }
.house { margin-top: 16px; }
.crumb { width: 156px; height: 17px; margin-left: 8px; border: 1px solid #f55; font: 7px/15px "Open Sans"; letter-spacing: -.68px; word-spacing: .3px; padding-left: 2px; color: #666; }
.crumb a { color: #2b62b5; }
.photo { margin-left: 9px; }
</style>
